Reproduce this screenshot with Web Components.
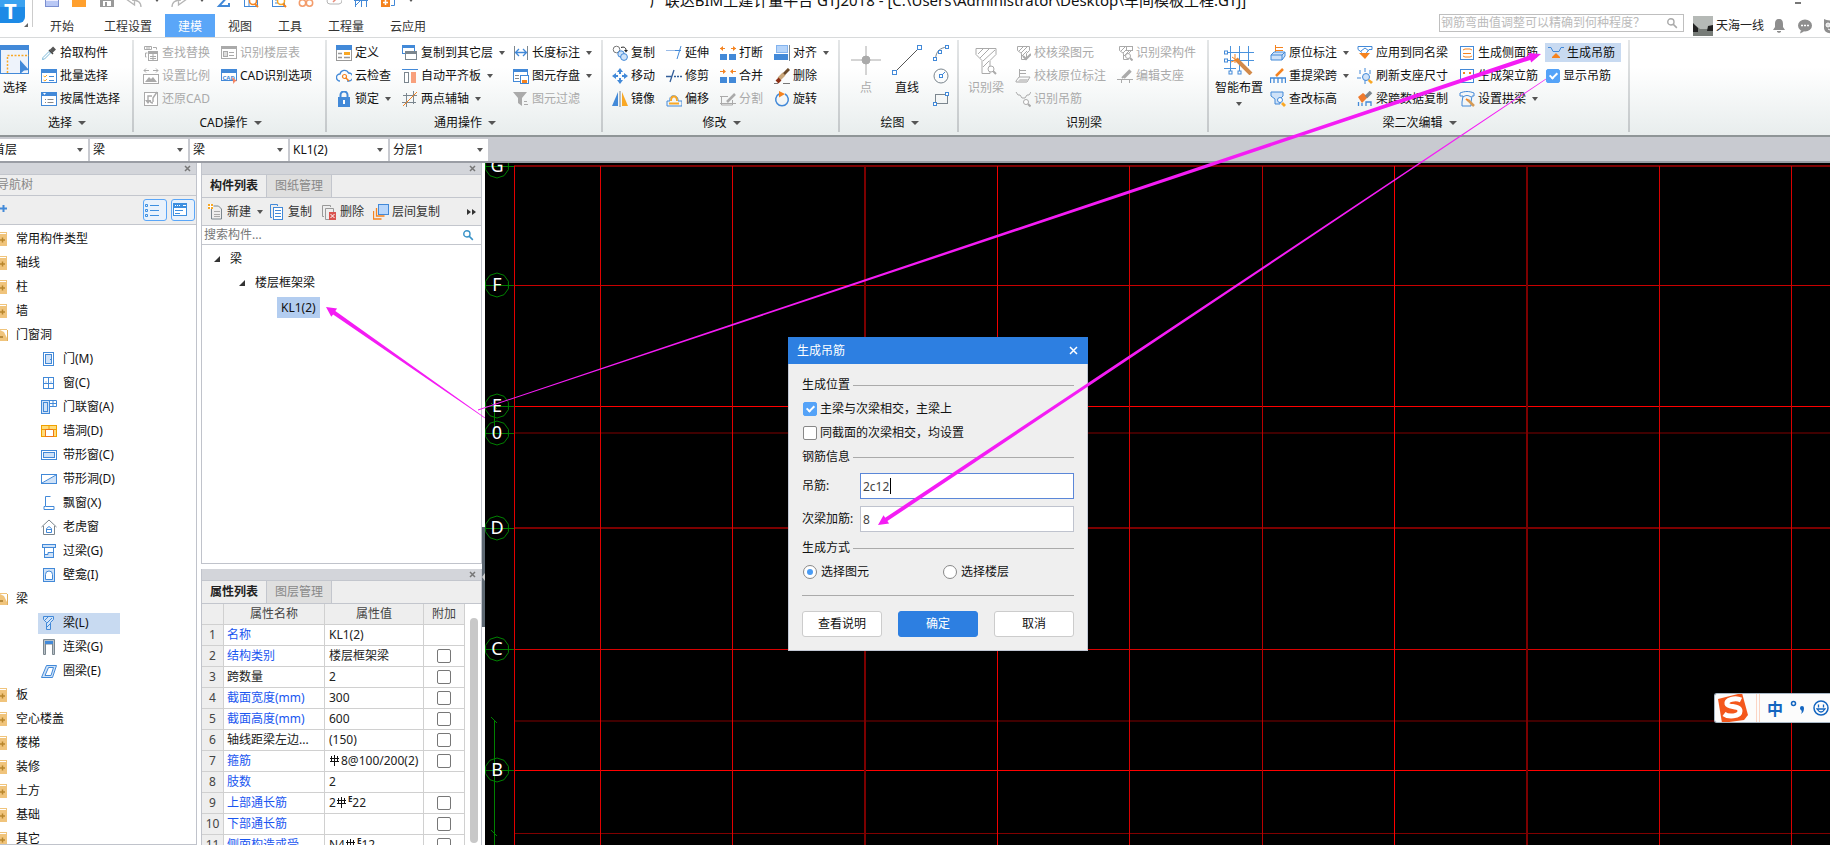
<!DOCTYPE html>
<html lang="zh-CN">
<head>
<meta charset="utf-8">
<title>广联达BIM土建计量平台 GTJ2018</title>
<style>
html,body{margin:0;height:100%;overflow:hidden;background:#fff}
body{font:12px/16px "Noto Sans","Noto Sans CJK SC",sans-serif;color:#111}
</style>
</head>
<body>
<gtj-app></gtj-app>
<script>
const define = (name, html, setup) => customElements.define(name, class extends HTMLElement {
  constructor() {
    super();
    this.attachShadow({mode: 'open'});
  }
  connectedCallback() {
    if (this.ready) return;
    this.ready = true;
    this.shadowRoot.innerHTML = typeof html === 'function' ? html(this) : html;
    if (setup) setup(this, this.shadowRoot);
  }
});

/* ---------- icon set ---------- */
const B = '#4289d8', L = '#cfe2f8', G = '#aaa', D = '#7b868e', O = '#f5831f', Y = '#f9a825';
const s = (d, c = B, w = 1) => `<path d="${d}" fill="none" stroke="${c}" stroke-width="${w}"/>`;
const f = (d, c = B) => `<path d="${d}" fill="${c}"/>`;
const r = (x, y, w, h, c = B, k = 'none') => `<rect x="${x}" y="${y}" width="${w}" height="${h}" fill="${c}" stroke="${k}"/>`;
const o = (x, y, q, c = 'none', k = B, w = 1) => `<circle cx="${x}" cy="${y}" r="${q}" fill="${c}" stroke="${k}" stroke-width="${w}"/>`;
const beamG = s('M2.5 1.5h12v4l-3 3v6h-5v-6l-4-3z', G) + s('M4 6l4-4M6 8l6-6M7 11l5-5', G);
const lens = c => o(11, 11, 2.5, '#fff', c) + s('M13 13l2.5 2.5', c, 2);
const ICONS = {
  /* quick access */
  qnew: r(1.5, 1.5, 13, 13, '#eef', '#7b8fd0') + r(2, 9, 12, 5, '#b9c8f5'),
  qopen: r(1, 1, 14, 14, '#ffa02e'),
  qsave: r(1, 1, 14, 14, '#999') + r(4, 9, 8, 5, '#fff') + r(6, 10, 2, 4, '#999'),
  undo: s('M15 15c0-6-5-7-9-7M1.5 8l7-5v10z', '#b5b5b5', 1.3),
  redo: s('M1 15c0-6 5-7 9-7M14.5 8l-7-5v10z', '#b5b5b5', 1.3),
  sigma: s('M13 4V1H3l6 6.500L3 14h10v-3', B, 2),
  qfind: r(1.5, 1.5, 13, 13, '#fff', B) + s('M1 7h8M6 7v7') + o(10, 9, 3.5, '#fff', O, 1.5) + s('M12 12l3 3', O, 2),
  qdoc: r(1.5, 1.5, 12, 13, '#fff', B) + s('M4 5h5M4 8h3M4 11h4') + o(10, 9, 3.5, '#fff', Y, 1.5) + s('M12 12l3 3', O, 2),
  qglass: s('M2 7v-5h12v5') + o(4.500, 11, 3.2, '#fff', '#f39c6b', 1.5) + o(11.500, 11, 3.2, '#fff', '#f39c6b', 1.5),
  qcloud: s('M4 12a3 3 0 010-6 4 4 0 018-1 3.500 3.500 0 011 7z', '#b5b5b5') + s('M7 10l4-4', '#e98d7c', 1.5),
  qgrid: s('M2.500 1v14M8.500 1v14M13.500 1v14M1 8.500h14M2 14L14 2'),
  qadd: r(1, 6, 9, 9, O) + s('M5.500 8v5M3 10.500h5', '#fff', 1.5) + s('M9 2.500h5.500v11H11'),
  /* ribbon */
  pick: s('M1.500 14.500l2-.5 6-6-1.500-1.500-6 6z', '#7ab8d8') + s('M8 5l4 4', '#444', 1.5) + s('M10 6.500l3.500-3.500', '#555', 4),
  batch: r(.5, 1.500, 15, 13, '#fff', B) + r(0, 1, 16, 4) + s('M2.500 8l1.500 1 2-2M2.500 12l1.500 1 2-2', Y) + s('M8 8.500h5M8 12.500h5'),
  prop: r(.5, 1.500, 15, 13, '#fff', B) + r(0, 1, 16, 4) + f('M2 2h3L3.500 4z', '#fff') + s('M4 8.500h1M6.500 8.500h6M4 11.500h1M6.500 11.500h6', '#888'),
  replace: s('M1.500 1.500h7v3h-7zM4 1v3M6 1v3M10 2.500h3.500v2M4.500 8h-2v4h1', G) + r(5.500, 6.500, 9, 9, '#fff', G) + r(6, 7, 8, 2, G) + s('M7 11.500h6M7 13.500h6M10 9v6', G),
  ratio: s('M1 2.500h5M3 .5l-2 2 2 2M10 2.500h5M13 .5l2 2-2 2', G) + r(.5, 6.500, 15, 9, '#fff', G) + f('M2 14l4-5 2 2 2-2 4 5z', G),
  restore: r(1.500, 1.500, 13, 13, '#fff', G) + s('M14 1L10 7v4M10 12a3 3 0 01-3-3M9 5H5v5', G, 1.4) + f('M2 9h6l-3 4z', G),
  floor: r(.5, 1.500, 15, 12, '#fff', G) + r(0, 1, 16, 3, G) + r(2.500, 6.500, 4, 5, '#ddd', G) + s('M8 7.500h5M8 10.500h5', G),
  cad: r(.5, 1.500, 15, 11, '#fff', B) + r(0, 1, 16, 4) + '<text x="1.500" y="11.500" font-size="6" font-weight="700" fill="#4289d8">CAD</text>' + f('M11 9l5 4-2 .5-1.500 2.500z', '#f5835f'),
  def: r(.5, .5, 15, 15, '#fff', '#999') + r(0, 0, 16, 5) + r(8, 7, 6, 3, Y) + s('M2 8.500h4M2 12.500h4M8 12.500h6', '#999', 1.5),
  cloud: s('M4 13a3.500 3.500 0 010-7 4.500 4.500 0 018.500-1A4 4 0 0113 13h-2', B, 1.3) + o(8.500, 8.500, 2, 'none', O, 1.2) + s('M10 10l3 3', O, 1.5),
  lock: s('M4.500 7V4a3.500 3.500 0 017 0v3', B, 2) + r(2, 6, 12, 10) + r(7, 9, 2, 4, '#fff'),
  copyto: r(.5, .5, 12, 8, '#fff', B) + r(0, 0, 13, 3) + r(3.500, 6.500, 11, 8, '#fff', D) + r(3, 6, 12, 3, D),
  align: s('M0 1.500h16') + r(2.500, 4.500, 4, 10, '#fff', D) + r(9, 4, 5, 11, '#f8a07c'),
  axis: s('M4.500 2v14M11.500 0v13M1 4.500h14M0 11.500h14', D) + s('M1 15L15 1', O),
  dim: s('M1.500 1v14M14.500 1v14', D) + s('M3 7.500h10M6 4L2.500 7.500 6 11M10 4l3.500 3.500L10 11', B, 1.3),
  store: r(.5, 1.500, 14, 12, '#fff', B) + r(0, 1, 15, 3) + s('M2 7.500h4M2 10.500h4', '#888') + r(7.500, 7.500, 8, 8, '#fff', B) + r(9, 12, 5, 3, O),
  filter: f('M0 1h14L9 7v8l-4-3V7z', G) + s('M11 10.500h3M11 13.500h4', G),
  copy2: o(4.500, 4.500, 3.300, '#fff', '#777') + s('M9 2.500c3-1 5 0 5 3', '#222') + f('M12 5h4l-2 2.500z', '#222') + o(9, 9, 3.200, L) + o(12, 12, 3.400, L),
  move: f('M8 0l3 4H5zM8 16l3-4H5zM0 8l4-3v6zM16 8l-4-3v6z') + r(7, 3, 2, 3) + r(7, 10, 2, 3) + r(3, 7, 3, 2) + r(10, 7, 3, 2),
  mirror: f('M6 1v14H0z') + f('M10 1v14h6z', Y) + s('M8 0v16', D),
  extend: s('M0 5.500h9', '#9bbce8') + s('M9 5.500h6', B) + s('M15 1l-4 13'),
  trim: s('M0 8.500h6M8 8.500h2M11 8.500h2M14 8.500h2M8 2L4 14', '#345f9a', 1.3),
  offset: s('M1 15v-5h3C2 3 13 3 12 10h4v5z') + s('M3 12.500h10M5 10c0-6 6-6 6 0', Y, 1.800),
  brk: r(0, 9, 7, 6) + r(9, 9, 7, 6) + s('M0 3.500h5M11 3.500h5', O) + f('M3 1v5L0 3.500zM13 1v5l3-2.500z', O),
  merge: r(0, 9, 7, 6) + r(9, 9, 7, 6) + s('M0 3.500h5M11 3.500h5', O) + f('M3 1v5l3-2.500zM13 1v5l-3-2.500z', O),
  split: s('M1.500 5v9h11V9M0 5.500h8M0 12.500h16', G) + s('M7 11l8-8', G, 2.500),
  aligns: r(2.500, .5, 11, 7, '#b5d4fa', '#83b3ee') + r(0, 9, 14, 6) + s('M15.500 0v16', D),
  erase: s('M0 15.500h4M9 15.500h7', '#777') + s('M9 7l6-6', '#6a4a2a', 3) + s('M5 11l5-5', '#c9a679', 4) + s('M3 14l3-3', '#8c2f15', 4),
  rotate: s('M5 3a6.300 6.300 0 106 0', B, 1.500) + f('M5 0l6 3-6 3.500z', O),
  arc: s('M2.500 14C3 6 7 3 14 2', D, 1) + r(.5, 12.500, 3, 3, '#fff', B) + r(5.500, 5.500, 3, 3, '#fff', B) + r(12.500, .5, 3, 3, '#fff', B),
  circ: o(8, 8, 7, 'none', D) + s('M8 8l4-4') + r(6.500, 6.500, 3, 3, '#fff', B),
  rect: r(2.500, 3.500, 12, 9, 'none', D) + r(.5, 11.500, 3, 3, '#fff', B) + r(12.500, 1.500, 3, 3, '#fff', B),
  chkbeam: beamG + s('M8 11l3 3 5-5', G, 2),
  chkorig: s('M4.500 1v8M5 2.500h6M5 5.500h6', G) + s('M1 13l3-4h11l-3 5H1z', G) + f('M2 14l3-3h8l-2 4H3z', '#ccc'),
  hangG: s('M1 1l2 3h2l2 3h3l2-3h2l2-3', G) + lens(G),
  beamobj: beamG + r(9.500, 1.500, 6, 4, '#fff', G) + lens(G),
  support: s('M5 10l8-8M7 10l7-7', G, 2) + s('M0 11.500h16M4.500 12v3M12.500 12v3', G),
  orig: s('M5.500 0v8M6 2.500h7M6 5.500h7', O) + `<path d="M1 10l3-3h11v4l-3 4H1z" fill="${L}" stroke="${B}"/>` + s('M1 10h11l3-3M12 10v5'),
  respan: s('M6 8l7-7', O, 2.500) + s('M.5 15v-5h15v5M4 10v5M8 10v5M12 10v5', B, 1.300),
  elev: `<path d="M1 1h12v4l-3 3v5H5V8L1 5z" fill="${L}" stroke="${B}"/>` + o(10, 9, 2.500, '#fff') + f('M13 11l3 3-2 2-3-3z', Y),
  apply: s('M1 1.500h14v3h-3l-3 4M1 1.500v3l4 3', B) + s('M4 6l4-3 4 3', B) + f('M2 8h11l-5 6z', O),
  refresh: s('M8 0v4M3 2v4M13 2v4M0 10h4M8 12v4', B) + o(9, 9, 3.500, L) + f('M12 11l4 3-2 2-3-3z', Y),
  spancopy: f('M1 6l5-4 5 4-6 6z', '#ef7a2d') + s('M9 6l5-5', '#7b868e', 3.500) + s('M1.500 15v-4M5 15v-3M9 15v-4h5v4', B, 1.300),
  side: r(1.500, 1.500, 13, 13, '#fff', B) + s('M4 5l2-1h5l2 1M4 8.500h8M4 11l2 1h5l2-1', O),
  erect: r(1.500, 1.500, 13, 13, '#fff', B) + r(4, 4, 2, 2, O) + r(10, 4, 2, 2, O) + s('M4 11.500h8', B),
  arch: s('M1 5V2c5-2 9-2 14 0v3h-2l-1 6v4H3v-4L4 5z') + s('M4 6c3-2 5-2 8 0') + s('M7 8l3 2', O, 2) + s('M9 9l6 6', '#d59a55', 2.500),
  hang: s('M0 2.500h3l2 4h6l2-4h3', B) + f('M8 8l4 4v1H4v-1z', O),
  /* toolbars */
  list: s('M1.500 2.500h2v2h-2zM1.500 7.500h2v2h-2zM1.500 12.500h2v2h-2zM6 3.500h9M6 8.500h9M6 13.500h9', '#3d8fe0'),
  pane: r(1.500, 1.500, 13, 12, '#fff', '#3d8fe0') + r(1, 1, 14, 5, '#3d8fe0') + s('M3 3.500h1M5 3.500h1M7 3.500h1M11 3.500h3', '#fff') + s('M3 8.500h8M3 11.500h5', '#3d8fe0'),
  plus: s('M10.500 3v7M7 6.500h7', B, 2) + s('M2 11h4', B, 2),
  fnew: s('M3.500 3v12h10V5l-3-3h-5', D) + s('M6 7.500h6M6 10.500h6M6 12.500h6', '#aaa') + r(0, 0, 5, 5, Y) + s('M0 2.500h5M2.500 0v5', '#fff'),
  fcopy: s('M3 13.500H1.500v-13h7V2') + r(4.500, 3.500, 9, 12, '#fff', B) + s('M6 6.500h6M6 9.500h6M6 12.500h6'),
  fdel: s('M3 12.500H1.500v-11h8V3', '#999') + s('M8 15.500H4.500v-11h8V8', '#999') + r(8, 8, 7, 8, '#d9534f') + s('M9.500 10l4 4M13.500 10l-4 4', '#fff'),
  ffloor: r(5.500, .5, 10, 10, '#b8d6fb', B) + s('M3.500 4v8h8M.5 7v8h8', O, 1.300),
  more: f('M6 5l4 3-4 3zM11 5l4 3-4 3z', '#333'),
  find: o(6.500, 6.500, 4.200, 'none', 'currentColor', 1.800) + s('M9.500 9.500l5 5', 'currentColor', 2),
  /* tree */
  fold: r(0, 1, 15, 14, '#f0c47c') + r(1, 2, 13, 1, '#fff') + s('M8 9h5M10.500 6.500v5', '#b8862d', 1.500),
  open: r(0, 2, 15, 12, '#f0c47c') + f('M8 3h7l1 10-4-8z', '#fff') + s('M15.500 3v11', '#e0ae5c') + s('M8 10h3', '#a67828', 1.500),
  door: r(2.500, 1.500, 10, 13, '#fff', B) + r(4.500, 3.500, 6, 9, L, B) + s('M9.500 8v1'),
  win: r(2.500, 2.500, 10, 11, '#fff', B) + s('M7.500 3v10M3 8.500h9M5 6.500v1M10 6.500v1'),
  doorwin: r(.5, 1.500, 8, 13, L, B) + r(2.500, 3.500, 4, 9, L, B) + s('M8 1.500h7.500v6H8M8 4.500h7M12 1v6'),
  hole: r(.5, 2.500, 15, 11, '#ffdc7a', '#f0a000') + r(4.500, 6.500, 8, 7, '#fff', '#f07818') + s('M0 6.500h4M12 6.500h4M8 3v3', '#f0a000'),
  stripwin: r(.5, 3.500, 15, 9, '#fff', B) + r(2.500, 5.500, 11, 5, L, B),
  striphole: `<path d="M15 4v8H2z" fill="${L}"/>` + r(.5, 3.500, 15, 9, 'none', B) + s('M1 12L15 4'),
  bay: s('M9.500 1.500h-5v10h-1.500v3h10v-3h-8'),
  dormer: s('M.5 8L8 1l7.500 7M2.500 7v8.500h11V7', D) + s('M5.500 13.500v-4l2.500-2 2.500 2v4zM6 10.500h4'),
  lintel: r(1.500, 1.500, 13, 3, L, B) + r(3.500, 4.500, 9, 10, '#fff', B) + f('M4 14v-2h3v-3h5v5z', L) + s('M4 11.500h3v-2h5'),
  niche: r(2.500, 1.500, 11, 13, L, B) + `<path d="M4.500 12.500v-5a3.500 3.500 0 017 0v5z" fill="#fff" stroke="${B}"/>`,
  beam: `<path d="M2.500 1.500h10v3l-3 3v7h-4v-7l-3-3z" fill="${L}" stroke="${B}"/>` + s('M4 5l3-3M6 8l5-5M6 12l3-3', B),
  link: `<path d="M2.500 .5h11v15h-2V5h-7v10.500h-2z" fill="#b9c2c8" stroke="${D}"/>` + r(4, 2, 8, 3),
  ring: `<path d="M5.500 2.500h10l-4 12H.5z" fill="${L}" stroke="${B}"/>` + '<path d="M7.500 4.500h5l-2.500 8H4z" fill="#fff" stroke="#4289d8"/>',
  /* user area */
  bell: f('M8 1c3 0 4 2 4 5v3l2 3H2l2-3V6c0-3 1-5 4-5zM6 13h4v1l-2 1-2-1z', '#8e8e8e'),
  chat: `<ellipse cx="8" cy="7.500" rx="7" ry="6" fill="#8e8e8e"/>` + f('M4 12l-1 3.500 4-2z', '#8e8e8e') + s('M4 7.500h2M7 7.500h2M10 7.500h2', '#fff', 1.500),
  owl: f('M1 1c3 2 11 2 14 0v9c0 7-14 7-14 0z', '#8e8e8e') + o(5, 7, 2, '#ddd', '#fff') + o(11, 7, 2, '#ddd', '#fff') + s('M5 11q3 3 6 0', '#fff'),
  rebar: s('M5.500 1v11M1 4.500h9M1 7.500h9M2.500 2v6M8.500 2v6', '#111', 1),
  punct: o(3.500, 3.500, 2, 'none', '#1365c0', 1.500) + f('M10 8a2 2 0 114 0c0 3-1 5-3 6 1-2 1-3 0-4a2 2 0 01-1-2z', '#1365c0'),
  smile: o(8, 8, 7, 'none', '#1365c0', 1.500) + s('M5.500 4.500v3M10.500 4.500v3M4 9q4 6 8 0z', '#1365c0', 1.300),
  /* large, 30 px grid */
  Lselect: r(.5, .5, 28, 28, '#eef3fb', B) + r(0, 0, 29, 5) + `<path d="M7.500 28V10.500H29" fill="none" stroke="${Y}" stroke-width="1.500" stroke-dasharray="2 1.500"/>` + f('M20 15l9 10-5 .5-4 3.500z'),
  Lpoint: s('M15 1v29M0 15h30', '#aaa') + o(15, 15, 4, '#aaa', '#aaa'),
  Lline: s('M3 27L27 3', '#555') + r(.5, 25.500, 4, 4, '#fff', B) + r(25.500, .5, 4, 4, '#fff', B),
  Lbeam: s('M5 3.500h20v6l-6 6v13h-8v-13l-6-6z', G) + s('M7 9l5-5M9 13l9-9M12 16L24 5M12 22l6-6', G) + o(20, 24, 3, '#fff', G) + s('M22 26l3 3', G, 2),
  Lsmart: s('M6.500 1v28M15.500 1v28M24.500 1v20M0 7.500h30M0 15.500h30M0 23.500h12', '#4b93dd', 1) + s('M12 14l15 15', '#d28a4a', 4) + s('M8 12l7 5M11 9v9M7 17l8-3', O) + r(.5, 6, 3, 3, '#fff', B) + r(.5, 14, 3, 3, '#fff', B) + r(5, 26, 3, 3, '#fff', B) + r(14, 26, 3, 3, '#fff', B),
};
define('gtj-icon', h => {
  const n = h.getAttribute('name'), big = n[0] === 'L', v = big ? 30 : 16;
  return `<style>:host{display:block;flex:none;width:${v}px;height:${v}px}svg{display:block}</style>
  <svg width="${v}" height="${v}" viewBox="0 0 ${v} ${v}" aria-hidden="true">${ICONS[n]}</svg>`;
});

/* ---------- ribbon ---------- */
const ARROW = 'width:0;height:0;border:3px solid transparent;border-top:4px solid #555;border-bottom:0;flex:none';
define('rb-group', h => `<style>
:host{display:flex;flex-direction:column;box-sizing:border-box;flex:none;height:97px;position:relative;padding-left:var(--lead,9px)}
:host::after{content:"";position:absolute;right:0;top:2px;bottom:3px;width:2px;background:linear-gradient(#e4e6e7,#c4c8ca)}
.body{display:flex;gap:11px;height:70px;margin-top:3px}
.label{display:flex;align-items:center;justify-content:center;gap:6px;height:24px;margin-left:calc(-1 * var(--lead,9px))}
i{${ARROW};border-width:4px 4px 0}
</style><div class="body"><slot></slot></div><div class="label">${h.getAttribute('label')}${h.hasAttribute('menu') ? '<i></i>' : ''}</div>`);
define('rb-col', `<style>:host{display:flex;flex-direction:column;align-items:flex-start}</style><slot></slot>`);
define('rb-button', h => `<style>
:host{display:flex;height:23px;align-items:center}
:host([menu]){margin-right:-3px}
button{all:unset;display:flex;align-items:center;gap:3px;height:19px;white-space:nowrap;color:#111}
button:disabled{color:#aaa}
:host([active]) button{background:#c8daf1;padding:0 6px 0 3px}
i{${ARROW};margin-left:3px}
</style><button ${h.hasAttribute('disabled') ? 'disabled' : ''}><gtj-icon name="${h.getAttribute('icon')}"></gtj-icon><slot></slot>${h.hasAttribute('menu') ? '<i></i>' : ''}</button>`);
define('rb-big', h => `<style>
:host{display:flex;flex:none}
button{all:unset;display:flex;flex-direction:column;align-items:center;gap:5px;padding-top:4px;min-width:30px;white-space:nowrap;color:#111}
button:disabled{color:#aaa}
i{${ARROW};margin-top:1px}
</style><button ${h.hasAttribute('disabled') ? 'disabled' : ''}><gtj-icon name="${h.getAttribute('icon')}"></gtj-icon><slot></slot>${h.hasAttribute('menu') ? '<i></i>' : ''}</button>`);
define('gtj-check', h => {
  const t = h.getAttribute('type') || 'checkbox';
  return `<style>
:host{display:flex;align-items:center;height:24px}
label{display:flex;align-items:center;gap:var(--gap,3px);white-space:nowrap}
input{appearance:none;box-sizing:border-box;width:14px;height:14px;margin:0;border:1px solid #888;border-radius:2px;background:#fff;flex:none;display:grid;place-items:center}
input[type=radio]{border-radius:50%}
input[type=checkbox]:checked{background:#55a3f8;border-color:#55a3f8}
input[type=checkbox]:checked::before{content:"";width:3px;height:6px;border:solid #fff;border-width:0 2px 2px 0;transform:rotate(45deg);margin-bottom:2px}
input[type=radio]:checked::before{content:"";width:6px;height:6px;border-radius:50%;background:#4a9cf5}
</style><label><input type="${t}" ${h.hasAttribute('name') ? `name="${h.getAttribute('name')}"` : ''} ${h.hasAttribute('checked') ? 'checked' : ''}><slot></slot></label>`;
});
const b = (icon, text, at = '') => `<rb-button icon="${icon}" ${at}>${text}</rb-button>`;
define('gtj-ribbon', `<style>
:host{display:flex;background:linear-gradient(#fff 30%,#e8eded);border-top:1px solid #d8dadb;border-bottom:2px solid #8f9597;height:97px;overflow:hidden}
.check{padding-left:1px}
</style>
<rb-group label="选择" menu style="width:134px;--lead:0px"><rb-big icon="Lselect">选择</rb-big>
<rb-col>${b('pick', '拾取构件')}${b('batch', '批量选择')}${b('prop', '按属性选择')}</rb-col></rb-group>
<rb-group label="CAD操作" menu style="width:193px">
<rb-col>${b('replace', '查找替换', 'disabled')}${b('ratio', '设置比例', 'disabled')}${b('restore', '还原CAD', 'disabled')}</rb-col>
<rb-col>${b('floor', '识别楼层表', 'disabled')}${b('cad', 'CAD识别选项')}</rb-col></rb-group>
<rb-group label="通用操作" menu style="width:276px">
<rb-col>${b('def', '定义')}${b('cloud', '云检查')}${b('lock', '锁定', 'menu')}</rb-col>
<rb-col>${b('copyto', '复制到其它层', 'menu')}${b('align', '自动平齐板', 'menu')}${b('axis', '两点辅轴', 'menu')}</rb-col>
<rb-col>${b('dim', '长度标注', 'menu')}${b('store', '图元存盘', 'menu')}${b('filter', '图元过滤', 'disabled')}</rb-col></rb-group>
<rb-group label="修改" menu style="width:237px">
<rb-col>${b('copy2', '复制')}${b('move', '移动')}${b('mirror', '镜像')}</rb-col>
<rb-col>${b('extend', '延伸')}${b('trim', '修剪')}${b('offset', '偏移')}</rb-col>
<rb-col>${b('brk', '打断')}${b('merge', '合并')}${b('split', '分割', 'disabled')}</rb-col>
<rb-col>${b('aligns', '对齐', 'menu')}${b('erase', '删除')}${b('rotate', '旋转')}</rb-col></rb-group>
<rb-group label="绘图" menu style="width:119px;--lead:11px"><rb-big icon="Lpoint" disabled>点</rb-big><rb-big icon="Lline">直线</rb-big>
<rb-col>${b('arc', '')}${b('circ', '')}${b('rect', '')}</rb-col></rb-group>
<rb-group label="识别梁" style="width:250px"><rb-big icon="Lbeam" disabled>识别梁</rb-big>
<rb-col>${b('chkbeam', '校核梁图元', 'disabled')}${b('chkorig', '校核原位标注', 'disabled')}${b('hangG', '识别吊筋', 'disabled')}</rb-col>
<rb-col>${b('beamobj', '识别梁构件', 'disabled')}${b('support', '编辑支座', 'disabled')}</rb-col></rb-group>
<rb-group label="梁二次编辑" menu style="width:421px;--lead:6px"><rb-big icon="Lsmart" menu>智能布置</rb-big>
<rb-col style="margin-left:-4px">${b('orig', '原位标注', 'menu')}${b('respan', '重提梁跨', 'menu')}${b('elev', '查改标高')}</rb-col>
<rb-col>${b('apply', '应用到同名梁')}${b('refresh', '刷新支座尺寸')}${b('spancopy', '梁跨数据复制')}</rb-col>
<rb-col>${b('side', '生成侧面筋')}${b('erect', '生成架立筋')}${b('arch', '设置拱梁', 'menu')}</rb-col>
<rb-col style="margin-left:-4px">${b('hang', '生成吊筋', 'active')}<gtj-check class="check" checked>显示吊筋</gtj-check></rb-col></rb-group>`);

/* ---------- title bar and tabs ---------- */
define('gtj-header', `<style>
:host{display:grid;grid-template-columns:37px 1fr;height:37px;background:#fff;position:relative;overflow:hidden}
.logo{position:relative}
.logo svg{display:block}
.main{display:grid;grid-template-rows:14px 23px;min-width:0}
.top{display:flex;align-items:flex-end;height:8px;overflow:hidden;padding-left:7px}
.quick{display:flex;align-items:center;justify-content:space-between;width:370px}
.quick i{${ARROW}}
.title{position:absolute;left:0;right:0;top:-10px;text-align:center;font-size:15px;line-height:20px;padding-left:66px;box-sizing:border-box}
.min{position:absolute;right:29px;top:2px;width:6px;height:2px;background:#777}
.row{display:flex;justify-content:space-between}
nav{display:flex}
nav a{padding:0 13px;line-height:25px;color:#333;text-decoration:none}
nav a.file{padding-right:17px}
nav a.on{background:#5aa6f8;color:#fff}
.user{display:flex;align-items:center;gap:10px;margin-right:-9px}
.find{display:flex;align-items:center;box-sizing:border-box;width:245px;height:18px;border:1px solid #bfbfbf;padding:0 5px 0 1px;color:#aaa;margin:0 -1px 5px 0}
input{flex:1;min-width:0;border:0;outline:0;padding:0;background:none;font:inherit;color:inherit}
input::placeholder{color:#bbb}
.name{display:flex;align-items:center;gap:3px;color:#222;margin-right:-3px}
</style>
<div class="logo"><svg width="36" height="37"><rect x="-8" y="-8" width="33" height="31" rx="6" fill="#1d8ae6"/><rect x="-8" y="-8" width="33" height="15" fill="#3ba2f0"/><text x="4" y="19" font-size="22" font-weight="700" fill="#fff">T</text><path d="M28 23v4h-4z" fill="#666"/><path d="M32.500 0v27" stroke="#ccc"/></svg></div>
<div class="main"><div class="top"><div class="quick"></div></div>
<div class="row"><nav><a class="file" href="#">开始</a><a href="#">工程设置</a><a class="on" href="#">建模</a><a href="#">视图</a><a href="#">工具</a><a href="#">工程量</a><a href="#">云应用</a></nav>
<div class="user"><div class="find"><input aria-label="搜索" placeholder="钢筋弯曲值调整可以精确到何种程度？"><gtj-icon name="find" style="zoom:.75"></gtj-icon></div>
<span class="name"><svg width="20" height="20"><rect width="20" height="20" fill="#b5b9b6"/><path d="M0 9l3 1 4 3h13v7H0z" fill="#777c78"/><path d="M0 7l5 5v4H0zM15 10l5-1v6h-6z" fill="#222"/></svg>天海一线</span>
<gtj-icon name="bell"></gtj-icon><gtj-icon name="chat"></gtj-icon><gtj-icon name="owl"></gtj-icon></div></div></div>
<div class="title">广联达BIM土建计量平台 GTJ2018 - [C:\\Users\\Administrator\\Desktop\\车间模板工程.GTJ]</div><div class="min"></div>`, (h, root) => {
  root.querySelector('.quick').innerHTML = ['qnew', 'qopen', 'qsave', 'undo', '', 'redo', '', 'sigma', 'qfind', 'qdoc', 'qglass', 'qcloud', 'qgrid', 'qadd', '']
    .map(n => n ? `<gtj-icon name="${n}"></gtj-icon>` : '<i></i>').join('');
});

/* ---------- combo bar ---------- */
define('gtj-combos', h => `<style>
:host{display:flex;gap:2px;height:22px;padding-top:2px;margin-left:-10px;background:#c8cad0;border-bottom:2px solid #9a9da4}
span{position:relative;display:block;width:98px}
select{appearance:none;width:98px;height:22px;border:0;border-radius:0;background:#fff;padding:0 14px 0 3px;font:inherit;color:#111;outline:0}
span::after{content:"";position:absolute;right:5px;top:9px;${ARROW}}
</style>` + ['首层', '梁', '梁', 'KL1(2)', '分层1'].map((t, i) => `<span><select aria-label="选项${i + 1}"><option>${t}</option></select></span>`).join(''));

/* ---------- docks ---------- */
define('dock-panel', h => `<style>
:host{display:flex;flex-direction:column;background:#fff;border:1px solid #c0c3cb;border-top:0;box-sizing:border-box;min-height:0;overflow:hidden}
header{display:flex;justify-content:flex-end;align-items:center;height:11px;padding-right:5px;background:#d3d5da;border-bottom:1px solid #c3c6cd;flex:none}
button{all:unset;display:block;width:7px;height:7px}
svg{display:block}
</style><header><button aria-label="关闭"><svg width="7" height="7"><path d="M1 1l5 5M6 1L1 6" stroke="#777" stroke-width="1.500"/></svg></button></header><slot></slot>`);
define('panel-tabs', h => {
  const [a, c] = h.getAttribute('tabs').split(',');
  return `<style>:host{display:flex;height:22px;background:#eee;border-bottom:1px solid #c3c6cd;flex:none}
button{all:unset;box-sizing:border-box;width:65px;text-align:center;border-right:1px solid #c3c6cd;color:#888;background:#dfdfdf}
button.on{background:#eee;color:#222;font-weight:700}</style><button class="on">${a}</button><button>${c}</button>`;
});
define('tree-row', h => `<style>
:host{display:flex;align-items:center;height:24px;padding-left:1px}
:host([sub]){padding-left:47px}
a{display:flex;align-items:center;gap:8px;height:21px;color:#111;text-decoration:none;white-space:nowrap}
:host([sub]) a{box-sizing:border-box;width:82px;gap:6px;padding-left:3px}
:host([on]) a{background:#c8daf1}
</style><a href="#"><gtj-icon name="${h.getAttribute('icon')}"></gtj-icon><slot></slot></a>`);
const t = (i, x, at = '') => `<tree-row icon="${i}" ${at}>${x}</tree-row>`;
define('nav-tree', `<style>
:host{display:flex;min-height:0}
dock-panel{width:207px;margin-left:-10px}
.cap{height:20px;line-height:20px;padding-left:6px;color:#888;background:#eee;border-bottom:1px solid #c3c6cd;flex:none}
.bar{display:flex;align-items:center;gap:4px;height:28px;background:#eee;border-bottom:1px solid #c3c6cd;padding:0 1px 0 2px;flex:none}
.bar gtj-icon:first-child{margin-right:auto}
.bar button{all:unset;box-sizing:border-box;width:24px;height:22px;border:1px solid #5aa6f8;border-radius:3px;background:#e9f2fc;display:grid;place-items:center}
.tree{padding-top:2px;overflow:hidden}
</style><dock-panel><div class="cap">导航树</div>
<div class="bar"><gtj-icon name="plus"></gtj-icon><button aria-label="列表"><gtj-icon name="list"></gtj-icon></button><button aria-label="面板"><gtj-icon name="pane"></gtj-icon></button></div>
<div class="tree">${t('fold', '常用构件类型')}${t('fold', '轴线')}${t('fold', '柱')}${t('fold', '墙')}${t('open', '门窗洞')}
${t('door', '门(M)', 'sub')}${t('win', '窗(C)', 'sub')}${t('doorwin', '门联窗(A)', 'sub')}${t('hole', '墙洞(D)', 'sub')}${t('stripwin', '带形窗(C)', 'sub')}${t('striphole', '带形洞(D)', 'sub')}${t('bay', '飘窗(X)', 'sub')}${t('dormer', '老虎窗', 'sub')}${t('lintel', '过梁(G)', 'sub')}${t('niche', '壁龛(I)', 'sub')}
${t('open', '梁')}${t('beam', '梁(L)', 'sub on')}${t('link', '连梁(G)', 'sub')}${t('ring', '圈梁(E)', 'sub')}
${['板', '空心楼盖', '楼梯', '装修', '土方', '基础', '其它'].map(x => t('fold', x)).join('')}</div></dock-panel>`);

define('member-list', `<style>
:host{display:flex;min-height:0}
dock-panel{flex:1}
.bar{display:flex;align-items:center;gap:9px;height:27px;padding:0 4px 0 6px;background:#eee;border-bottom:1px solid #c3c6cd;flex:none}
.bar button{all:unset;display:flex;align-items:center;gap:3px;color:#333;white-space:nowrap}
.bar button:first-child{margin-right:-3px}
.bar button:last-child{margin-left:auto}
i{${ARROW};margin-left:3px}
.find{display:flex;align-items:center;height:18px;border-bottom:1px solid #c3c6cd;padding:0 7px 0 2px;color:#3a93c8;flex:none}
input{flex:1;min-width:0;border:0;outline:0;padding:0;font:inherit}
input::placeholder{color:#777}
.n{display:flex;align-items:center;gap:10px;height:24px}
.n::before{content:"";border:3px solid transparent;border-right-color:#333;border-bottom-color:#333}
.tree{padding:2px 0 0 12px}
.n+.n{padding-left:25px}
.leaf{display:flex;align-items:center;height:24px;padding-left:63px}
.leaf span{background:#b3cdf0;line-height:21px;padding:0 4px}
</style><dock-panel><panel-tabs tabs="构件列表,图纸管理"></panel-tabs>
<div class="bar"><button><gtj-icon name="fnew"></gtj-icon>新建<i></i></button><button><gtj-icon name="fcopy"></gtj-icon>复制</button><button><gtj-icon name="fdel"></gtj-icon>删除</button><button><gtj-icon name="ffloor"></gtj-icon>层间复制</button><button aria-label="更多"><gtj-icon name="more"></gtj-icon></button></div>
<div class="find"><input aria-label="搜索构件" placeholder="搜索构件..."><gtj-icon name="find" style="zoom:.75"></gtj-icon></div>
<div class="tree"><div class="n">梁</div><div class="n">楼层框架梁</div><div class="leaf"><span>KL1(2)</span></div></div></dock-panel>`);

const RB = '<gtj-icon class="rb" name="rebar"></gtj-icon>', RE = RB + '<sup>E</sup>';
const ROWS = [['名称', 'KL1(2)', 1, 0], ['结构类别', '楼层框架梁', 1, 1], ['跨数量', '2', 0, 1], ['截面宽度(mm)', '300', 1, 1], ['截面高度(mm)', '600', 1, 1], ['轴线距梁左边...', '(150)', 0, 1], ['箍筋', RB + '8@100/200(2)', 1, 1], ['肢数', '2', 1, 0], ['上部通长筋', '2' + RE + '22', 1, 1], ['下部通长筋', '', 1, 1], ['侧面构造或受...', 'N4' + RE + '12', 1, 1]];
define('prop-table', `<style>
:host{display:flex;min-height:0}
dock-panel{flex:1;border-bottom:0}
.wrap{display:flex;justify-content:space-between;overflow:hidden;min-height:0;flex:1}
table{border-collapse:separate;border-spacing:0;table-layout:fixed;width:263px;height:0;flex:none}
th,td{box-sizing:border-box;height:21px;line-height:20px;padding:0;border:solid #d0d0d0;border-width:0 1px 1px 0;font-weight:400;white-space:nowrap;overflow:hidden;text-align:left}
thead th{background:#eee;color:#444;text-align:center}
tbody th{background:#eee;color:#444;text-align:center}
td{padding-left:4px;color:#222}
td.k{padding-left:3px}
td.blue{color:#1a56f0}
td:last-child{padding:0}
td input{appearance:none;display:block;box-sizing:border-box;width:14px;height:14px;border:1px solid #777;border-radius:2px;background:#fff;margin:0 auto}
.rb{display:inline-block;width:12px;height:16px;overflow:hidden;vertical-align:middle}
sup{font-size:8px;line-height:8px;font-weight:700}
.bar{width:8px;margin:14px 3px 2px;border-radius:4px;background:#c8c8c8}
</style><dock-panel><panel-tabs tabs="属性列表,图层管理"></panel-tabs><div class="wrap"><table><colgroup><col style="width:22px"><col style="width:101px"><col style="width:99px"><col style="width:41px"></colgroup>
<thead><tr><th></th><th>属性名称</th><th>属性值</th><th>附加</th></tr></thead><tbody>
${ROWS.map((x, i) => `<tr><th>${i + 1}</th><td class="k ${x[2] ? 'blue' : ''}">${x[0]}</td><td>${x[1]}</td><td>${x[3] ? `<input type="checkbox" aria-label="附加${i + 1}">` : ''}</td></tr>`).join('')}
</tbody></table><div class="bar"></div></div></dock-panel>`);

/* ---------- drawing area ---------- */
define('cad-canvas', () => {
  const v = [[29, 1, '#e00000'], [115, 1, '#e00000'], [247, 1, '#e00000'], [379, 2, '#7c0000'], [512, 1, '#f00000'], [644, 1, '#d80000'], [777, 1, '#b80000'], [909, 1, '#ff0000'], [1041, 2, '#7c0000'], [1174, 1, '#d80000'], [1306, 1, '#d80000']];
  const hz = [[2, 2, '#7c0000'], [122, 1, '#c80000'], [243, 1, '#ff0000'], [269, 2, '#400000'], [364, 2, '#7c0000'], [486, 1, '#d80000'], [557, 2, '#400000'], [607, 1, '#ff0000'], [670, 1, '#800000']];
  const ax = [['G', 3], ['F', 122], ['E', 243], ['0', 270], ['D', 365], ['C', 486], ['B', 607]];
  const deca = y => Array.from({length: 10}, (_, i) => `${12 + 12 * Math.sin(i * Math.PI / 5)},${y - 12 * Math.cos(i * Math.PI / 5)}`).join(' ');
  return `<style>:host{display:block;background:#000;overflow:hidden;position:relative;min-width:0}svg{position:absolute;inset:0;width:100%;height:100%}
text{font:18px "Noto Sans",sans-serif;fill:#fff;text-anchor:middle}</style>
<svg aria-label="轴网">${hz.map(a => `<rect x="29" y="${a[0]}" width="100%" height="${a[1]}" fill="${a[2]}"/>`).join('')}
${v.map(a => `<rect x="${a[0]}" y="3" width="${a[1]}" height="100%" fill="${a[2]}"/>`).join('')}
<path d="M9.500 243v27M9.500 557v500M6 554l6 6M6 667l6 6M6 240l6 6" stroke="#008000" fill="none"/>
${ax.map(([n, y]) => `<path d="M0 ${y}.5h29" stroke="#007800"/><polygon points="${deca(y)}" fill="none" stroke="#008000"/><text x="12" y="${y + 6}">${n}</text>`).join('')}</svg><slot></slot>`;
});
define('rebar-dialog', `<style>
:host{position:absolute;left:303px;top:174px;width:300px;box-sizing:border-box;background:#efefef;border:1px solid #c3c8d4;border-top:0;color:#111}
header{display:flex;justify-content:space-between;align-items:center;height:27px;margin:0 -1px;padding:0 10px 0 9px;background:#2d7fe1;color:#fff}
header button{all:unset;display:block}
svg{display:block}
form{display:block;padding:9px 13px 13px}
h3{display:flex;align-items:center;gap:3px;height:24px;margin:0;font:inherit}
h3::after{content:"";flex:1;height:1px;background:#aaa}
.fields{display:grid;gap:7px;padding:4px 0}
.f{display:grid;grid-template-columns:58px 1fr;align-items:center;position:relative}
.f input{box-sizing:border-box;width:100%;height:26px;border:1px solid #bfc3ce;background:#fff;padding:0 2px;font:inherit;color:#444;outline:0;border-radius:0}
.f input.focus{border-color:#5b87d8}
.caret{position:absolute;left:88px;top:5px;width:1px;height:16px;background:#000}
gtj-check{padding-left:1px}
.radios{display:grid;grid-template-columns:140px 1fr;--gap:4px}
.acts{display:flex;justify-content:space-between;border-top:1px solid #aaa;margin-top:11px;padding-top:15px}
.acts button{box-sizing:border-box;width:80px;height:26px;border:1px solid #ccc;border-radius:3px;background:#fff;font:inherit;color:#111;padding:0}
.acts .ok{background:#2d7fe1;border-color:#2d7fe1;color:#fff}
</style><header>生成吊筋<button aria-label="关闭"><svg width="9" height="9"><path d="M1 1l7 7M8 1L1 8" stroke="#fff" stroke-width="1.500"/></svg></button></header>
<form onsubmit="return false"><h3>生成位置</h3><gtj-check checked>主梁与次梁相交，主梁上</gtj-check><gtj-check>同截面的次梁相交，均设置</gtj-check>
<h3>钢筋信息</h3><div class="fields"><div class="f"><label for="a">吊筋:</label><input id="a" class="focus" value="2c12"><span class="caret"></span></div>
<div class="f"><label for="b">次梁加筋:</label><input id="b" value="8"></div></div>
<h3>生成方式</h3><div class="radios"><gtj-check type="radio" name="m" checked>选择图元</gtj-check><gtj-check type="radio" name="m">选择楼层</gtj-check></div>
<div class="acts"><button type="button">查看说明</button><button type="button" class="ok">确定</button><button type="button">取消</button></div></form>`);
define('ime-bar', `<style>
:host{position:absolute;right:0;top:530px;display:flex;align-items:center;gap:7px;box-sizing:border-box;width:116px;height:30px;background:#fcfcfc;border:1px solid #a9b8c6;border-right:0;border-radius:3px 0 0 3px;overflow:hidden}
.s{margin-left:2px;flex:none}
b{font-size:16px;line-height:20px;color:#1365c0;font-family:"Noto Sans CJK SC",sans-serif}
hr{box-sizing:border-box;width:4px;height:28px;margin:0;border:solid #fbd5c5;border-width:0 1px;flex:none}
svg{display:block}
</style><svg class="s" width="32" height="30" viewBox="2 0 32 30"><path d="M3 6l24-6 6 22-4 5-22 3z" fill="#f4571c"/><path d="M26 7c-6-3-15 0-14 4s13 1 13 7-12 6-16 3" fill="none" stroke="#fff" stroke-width="5"/></svg><hr><b>中</b><gtj-icon name="punct"></gtj-icon><gtj-icon name="smile"></gtj-icon>`);

/* Tapered pointers drawn from a thin tail to a wide head */
define('mark-arrows', () => {
  const arrow = (x1, y1, x2, y2, w, hl, hw) => {
    const d = Math.hypot(x2 - x1, y2 - y1), ux = (x2 - x1) / d, uy = (y2 - y1) / d, bx = x2 - ux * hl, by = y2 - uy * hl;
    const p = (x, y, k) => `${(x - uy * k).toFixed(1)},${(y + ux * k).toFixed(1)}`;
    return `<polygon points="${[p(x1, y1, .4), p(bx, by, w), p(bx, by, hw), `${x2},${y2}`, p(bx, by, -hw), p(bx, by, -w), p(x1, y1, -.4)].join(' ')}"/>`;
  };
  return `<style>:host{position:absolute;inset:0;pointer-events:none}svg{display:block;width:100%;height:100%}polygon{fill:#f41cf4}</style>
<svg aria-hidden="true">${arrow(478, 410, 1541, 54, 2.2, 12, 5)}${arrow(1546, 79, 878, 525, 2, 10, 5)}${arrow(485, 418, 326, 307, 2, 10, 5)}</svg>`;
});

define('gtj-app', `<style>
:host{position:relative;display:flex;flex-direction:column;height:100vh;overflow:hidden;background:#fff}
.strip{background:#c8cad0;flex:none}
gtj-header,gtj-ribbon{flex:none}
main{display:grid;grid-template-columns:482px 3px 1fr;flex:1;min-height:0}
main>*{min-height:0}
.side{display:grid;grid-template-columns:197px 281px;column-gap:4px}
.mid{display:grid;grid-template-rows:401px 1fr;gap:5px;min-height:0}
.grip{display:flex;flex-direction:column;background:#fff;padding-top:364px}
.grip button{all:unset;height:100px;background:#5d6872;display:grid;align-items:center}
</style><gtj-header></gtj-header><gtj-ribbon></gtj-ribbon><div class="strip"><gtj-combos></gtj-combos></div>
<main><div class="side"><nav-tree></nav-tree><div class="mid"><member-list></member-list><prop-table></prop-table></div></div>
<div class="grip"><button aria-label="收起"><svg width="3" height="8"><path d="M3 0v8L0 4z" fill="#ccc"/></svg></button></div>
<cad-canvas><rebar-dialog></rebar-dialog><ime-bar></ime-bar></cad-canvas></main><mark-arrows></mark-arrows>`);
</script>
</body>
</html>
